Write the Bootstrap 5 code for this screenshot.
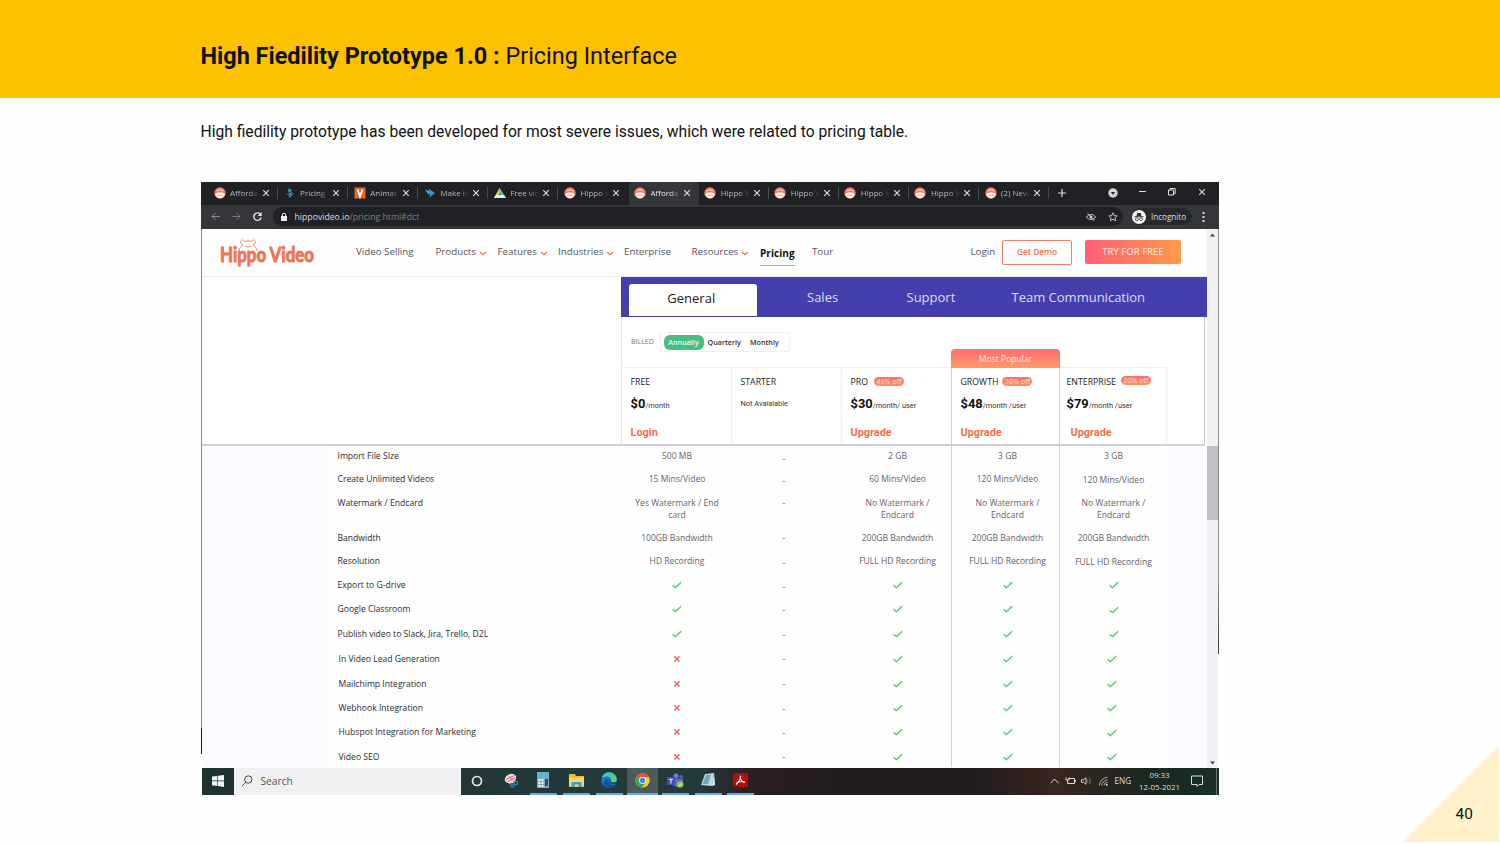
<!DOCTYPE html>
<html lang="en">
<head>
<meta charset="utf-8">
<meta name="viewport" content="width=device-width, initial-scale=1">
<title>High Fiedility Prototype 1.0 : Pricing Interface</title>
<link href="https://cdn.jsdelivr.net/npm/bootstrap@5.3.0/dist/css/bootstrap.min.css" rel="stylesheet">
<style>
html,body{height:844px;overflow:hidden}
body{background:#fefefe;font-family:Roboto,"Liberation Sans",sans-serif;color:#111;line-height:1.2}
svg{display:block;flex:none;overflow:visible}
.title-bar{height:98px;background:#fcc200;padding-left:200.5px;padding-top:15px}
.title-bar h1{font-size:23.45px;color:#111}
.intro{height:84px;padding:25px 0 0 200.5px;font-size:15.64px}
.stage{margin-left:201px;width:1018px}
.os{font-family:"Open Sans","Noto Sans",sans-serif}

.tab-strip{height:23px;background:#202124;padding-left:7px;color:#b9babd;font-size:8px}
.tab-item{width:70.1px;height:23px;padding-left:5.5px;padding-bottom:1px;position:relative}
.tab-item.sep::after{content:"";position:absolute;right:0;top:5px;height:12px;width:1px;background:#4b4c50}
.tab-item.active{background:#35363a;border-radius:4px 4px 0 0;color:#e4e4e6}
.tab-name{width:29px;margin-left:4.5px;overflow:hidden;white-space:nowrap;-webkit-mask-image:linear-gradient(90deg,#000 65%,transparent 100%);mask-image:linear-gradient(90deg,#000 65%,transparent 100%)}
.tool-row{height:24px;background:#35363a;color:#ddd;padding-bottom:.5px}
.address{height:19px;width:850px;background:#202124;border-radius:10px;font-size:8.7px;color:#dcdcde;padding:0 11px 0 8px;margin-left:10.5px}
.address .path-part{color:#7d7e82}
.incog{height:17px;background:#27282b;border-radius:9px;width:60px;font-size:8.1px;margin-left:9px}

.screen{height:538.5px;grid-template-columns:1px 1005px 11px 1px}
.edge-l{height:525px;background:linear-gradient(#8b8b8f 499px,#15171c 499px)}
.edge-r{height:425px;background:linear-gradient(#8a8a8e 350px,#3c3c40)}
.scroller{background:#f1f0f3;height:538px;color:#444;padding:4px 0 2px}
.thumb{height:74px;background:#c1c0c3;margin-top:209px}
.site-nav{height:48px;border-bottom:1px solid #efecf1;font-size:9.75px;color:#55555b}
.site-grid{display:grid;height:46px;align-items:center;grid-template-columns:154px 79.5px 62px 60.5px 66px 67.5px 68.5px 52px 158.5px 31.5px 70px 13px 96px}
.menu-link{display:flex;align-items:center;gap:3px}
.menu-link svg{margin-top:2px}
.now{font-weight:700;font-size:10.1px;color:#111;border-bottom:1px solid #f58b90;width:35px;height:20px;margin-top:7px;padding-top:1px;line-height:13px}
.demo{height:25px;border:1px solid #ef7f66;border-radius:2px;font-size:8.3px;font-weight:600;color:#ef7450;padding:1px 0 0}
.trial{height:24px;margin-top:-1px;border:0;border-radius:2px;background:linear-gradient(90deg,#ff5f76,#ff9a49);color:#ffe8df;font-size:9.6px;padding:1px 0 0}

.price-panel{height:169px;width:1003px;border-right:1px solid #c9c8cc;border-bottom:2px solid #cfced2;background:#fff;padding-left:419px}
.plan-tabs{height:39.5px;width:586px;background:#453fad;color:#dedcf5;font-size:13px;display:grid;grid-template-columns:7.5px 128.5px 50px 99.5px 105px auto;align-items:center;padding-top:2px}
.plan-tabs .on{height:32px;margin-top:5px;background:#fff;color:#222;border-radius:3px 3px 0 0;text-align:center;line-height:28px;padding-right:3px}
.plan-body{border-left:1px solid #e9e6ee;height:127.5px;width:583px}
.billing{height:50.5px;padding-left:9px}
.bill-word{font-size:7px;margin-top:21px;width:22.5px;color:#777}
.cycle{border:1px solid #f1eef2;border-radius:2px;height:20px;width:130px;margin:15.5px 0 0 6px;font-size:7.2px;font-weight:600;color:#333;padding-left:3px}
.cycle b{font-weight:600;background:#47bd82;color:#e6fff2;border-radius:6px;height:15px;width:40px;line-height:15px;text-align:center}
.popular{width:109px;height:19px;margin-left:161.5px;margin-top:32px;border-radius:4px 4px 0 0;background:linear-gradient(#fd6e70,#fd9a66);color:#ffe6dc;font-size:8.6px;line-height:20px;text-align:center}
.plans{display:grid;grid-template-columns:110px 110px 110px 108px 107px;border-top:1px solid #f0edf2;width:545px;height:77px}
.plan{border-right:1px solid #f1eef3;padding:9px 0 0 8.5px;height:76px;white-space:nowrap}
.plan.hot{border-right:1px solid #f9bdc4}
.plan .p-name{font-size:8.75px;line-height:11px;height:12px;color:#222}
.off{font-size:7.2px;line-height:8.5px;height:8.5px;width:30px;text-align:center;border-radius:5px;background:linear-gradient(#fd6e70,#fd9366);color:#ffe0d6;display:block}
.amount{font-family:Roboto,sans-serif;font-size:7.4px;color:#333;margin-top:7px;height:16px;line-height:16.5px}
.amount b{font-size:12.9px;color:#111}
.act{font-family:Roboto,sans-serif;color:#f0714e;font-weight:700;font-size:10.9px;margin-top:13.5px;line-height:14px}

.feature-zone{height:321px;overflow:hidden;display:grid;grid-template-columns:126px 294px 110px 110px 110px 108px 107px 1fr;background:#fefefe}
.side{background:#fafbfe}
.col-line{border-right:1px solid #f9bdc4}
.f-cell{font-size:8.55px;line-height:12px;color:#65646a;text-align:center;overflow:hidden}
.f-cell svg{margin:1.5px auto 0}
.f-labels{padding:3.5px 0 0 9.5px;color:#2b2b2f;font-size:8.6px;line-height:12px}
.tick{filter:drop-shadow(0 0 2px #b6f7c0)}

.taskbar{height:27px;margin-left:1px;width:1017px;background:linear-gradient(90deg,#1d312f 0,#24393a 38%,#23393a 49%,#2c1e21 54%,#201c20 63%,#211c20 76%,#3b241e 84%,#2b251f 88%,#17281f 94%,#1a3029)}
.start{width:32px;height:27px}
.find{width:227px;height:27px;background:#f0eff1;color:#555;font-size:10.2px;padding-left:7px}
.app{width:32.95px;height:27px;display:flex;align-items:center;justify-content:center}
.app.run span{border-bottom:2px solid #6ba5ec;width:27px;height:27px;display:flex;align-items:center;justify-content:center}
.app.front span{background:#4a5b5b;width:31px}
.tray{color:#dcdcdc;font-size:8.2px}
.clock{line-height:12px;width:42px;margin-left:8px;font-size:7.9px;white-space:nowrap;padding-bottom:1px}
.corner{position:absolute;right:1px;bottom:2px;width:96px;height:96px;background:#fff2cb;clip-path:polygon(100% 0,100% 100%,0 100%)}
.page-no{position:absolute;left:1455.5px;top:805px;font-size:15.4px}
</style>
</head>
<body>
<svg width="0" height="0" class="position-absolute">
<defs>
<symbol id="hippo" viewBox="0 0 12 12"><circle cx="6" cy="6" r="5.7" fill="#f4785f"/><path d="M1 7.2C2.5 4.5 9.500 4.500 11 7.200 10.500 9.500 8.500 11.200 6 11.200S1.500 9.500 1 7.200z" fill="#fff0e9"/><path d="M2.500 4.200c1-1.700 6-1.700 7 0" stroke="#ffe1d7" fill="none"/><path d="M2.500 8.500h7" stroke="#f4a08c" stroke-width=".7"/></symbol>
<symbol id="tri2" viewBox="0 0 12 12"><path d="M4.500 1 8 3.500 4.500 6z" fill="#2bb3c9"/><path d="M1.500 5.500 5 8 10.500 6 6 11z" fill="#2d6bd4"/><path d="M4.500 6.500 9 5 6 8z" fill="#74c34b"/></symbol>
<symbol id="vee" viewBox="0 0 12 12"><path d="M.5.5h11v11H.5z" fill="#e4682e"/><path d="M3.500 2.500 6 9.500 8.500 2.500" fill="none" stroke="#fff" stroke-width="1.800"/></symbol>
<symbol id="plays" viewBox="0 0 12 12"><path d="M1 2.500 6 4.500 5 8z" fill="#38c6dd"/><path d="M4.500 1.500 11 6 5.500 10.500 6 6z" fill="#2597cf"/></symbol>
<symbol id="drive" viewBox="0 0 12 12"><path d="M5.500 1 0 11h4l3.500-6.500z" fill="#e9d94f"/><path d="M5.500 1 12 11H9L4.500 4z" fill="#78c584"/><path d="M2 8h8l2 3H0z" fill="#dceef0"/><path d="M4 8 6 5l2 3z" fill="#3fa3a0"/></symbol>
<symbol id="close" viewBox="0 0 8 8"><path d="M1.200 1.200l5.600 5.600M6.800 1.200 1.200 6.800" stroke="currentColor" stroke-width="1.150"/></symbol>
<symbol id="down" viewBox="0 0 8 5"><path d="M1 1l3 2.700L7 1" fill="none" stroke="#ee7059" stroke-width="1.150"/></symbol>
<symbol id="ok" viewBox="0 0 10 8"><path d="M.7 4.200 3.400 6.700 9.200 1.200" fill="none" stroke="#62bd7b" stroke-width="1.300"/></symbol>
<symbol id="no" viewBox="0 0 8 8"><path d="M1.300 1.300l5.200 5.200M6.500 1.300 1.300 6.500" stroke="#ee5f60" stroke-width="1.400"/></symbol>
</defs>
</svg>

<header class="title-bar d-flex align-items-center"><h1 class="fw-normal mb-0"><b>High Fiedility Prototype 1.0 :</b> Pricing Interface</h1></header>
<p class="intro mb-0">High fiedility prototype has been developed for most severe issues, which were related to pricing table.</p>

<main class="stage">
  <div class="tab-strip os d-flex align-items-center">
    <div class="d-flex" id="tabs"></div>
    <div class="d-flex align-items-center flex-grow-1 pb-1" style="color:#ddd">
      <svg width="8" height="8" style="margin:2px 0 0 8.500px"><path d="M4 0v8M0 4h8" stroke="currentColor" stroke-width="1.200"/></svg>
      <svg width="10" height="10" style="margin:3px 0 0 42.500px"><circle cx="5" cy="5" r="4.700" fill="#d3d3d6"/><path d="M2.800 4h4.400L5 6.700z" fill="#202124"/></svg>
      <svg width="8" height="8" style="margin-left:21px"><path d="M0 3.500h7" stroke="currentColor"/></svg>
      <svg width="8" height="8" style="margin-left:21px"><path d="M.5 2h5v5h-5zM2 2V.5h5.200v5.200H5.500" fill="none" stroke="currentColor"/></svg>
      <svg width="8" height="8" style="margin-left:22px"><use href="#close"/></svg>
    </div>
  </div>
  <div class="tool-row os d-flex align-items-center">
    <svg width="9" height="9" viewBox="0 0 9 9" style="margin-left:9.500px"><path d="M8.700 4.500H1M4.500 1 1 4.500 4.500 8" fill="none" stroke="#8f9093"/></svg>
    <svg width="9" height="9" viewBox="0 0 9 9" style="margin-left:12px"><path d="M.3 4.500H8M4.500 1 8 4.500 4.500 8" fill="none" stroke="#77787c"/></svg>
    <svg width="9" height="9" viewBox="0 0 9 9" style="margin-left:12.500px"><path d="M7.500 2.500A3.700 3.700 0 1 0 8.100 5.500" fill="none" stroke="#ececec" stroke-width="1.300"/><path d="M8.700 0v4H4.700z" fill="#ececec"/></svg>
    <div class="address d-flex align-items-center">
      <svg width="6" height="8"><path d="M0 3h6v5H0z" fill="#eee"/><path d="M1.300 3V2a1.700 1.700 0 0 1 3.400 0v1" fill="none" stroke="#eee"/></svg>
      <span style="margin-left:8px">hippovideo.io<span class="path-part">/pricing.html#dct</span></span>
      <svg class="ms-auto" width="10" height="8" viewBox="0 0 10 8"><path d="M.5 4C2.500.7 7.500.7 9.500 4 7.500 7.300 2.500 7.300.5 4z" fill="none" stroke="#ccc"/><circle cx="5" cy="4" r="1.500" fill="#ccc"/><path d="M1.500.3l7 7.400" stroke="#ccc"/></svg>
      <svg width="10" height="10" viewBox="0 0 10 10" style="margin-left:11.500px;margin-right:-6px"><path d="M5 .8l1.200 2.800 3 .2-2.300 2 .8 3L5 7.200 2.300 8.800l.8-3-2.300-2 3-.2z" fill="none" stroke="#ccc" stroke-width=".9"/></svg>
    </div>
    <div class="incog d-flex align-items-center">
      <svg width="14" height="14" viewBox="0 0 14 14"><circle cx="7" cy="7" r="7" fill="#f4f4f4"/><path d="M4.500 6 5.200 3h3.600l.7 3z" fill="#333"/><path d="M2.500 6.700h9" stroke="#333"/><circle cx="4.900" cy="9.200" r="1.500" fill="none" stroke="#333" stroke-width=".8"/><circle cx="9.100" cy="9.200" r="1.500" fill="none" stroke="#333" stroke-width=".8"/></svg>
      <span style="margin-left:5.500px">Incognito</span>
    </div>
    <svg width="3" height="10" style="margin-left:10px"><path d="M.5 0h2v2h-2zM.5 4h2v2h-2zM.5 8h2v2h-2z" fill="#ddd"/></svg>
  </div>

  <div class="screen os d-grid">
    <div class="edge-l"></div>
    <div>
      <nav class="site-nav">
        <div class="site-grid">
          <svg width="130" height="46" viewBox="0 0 130 46"><text x="18" y="33" font-size="20.500" fill="#ef7350" stroke="#ef7350" stroke-width=".9" stroke-linejoin="round" font-family="Lato" font-weight="700" textLength="94" lengthAdjust="spacingAndGlyphs">Hippo Video</text><path d="M37 22c0-3 2-5 4-5.500-3-2-3-5.500-.5-5.500 1.500 0 2 1.500 2 1.500 2-.8 5-.8 7 0 0 0 .5-1.500 2-1.500 2.500 0 2.500 3.500-.5 5.500 2 .5 4 2.500 4 5.500M43 17c2 1.200 4.500 1.200 6.500 0" fill="none" stroke="#f08c72" stroke-width="1"/></svg>
          <span>Video Selling</span>
          <span class="menu-link">Products <svg width="8" height="5"><use href="#down"/></svg></span>
          <span class="menu-link">Features <svg width="8" height="5"><use href="#down"/></svg></span>
          <span class="menu-link">Industries <svg width="8" height="5"><use href="#down"/></svg></span>
          <span>Enterprise</span>
          <span class="menu-link">Resources <svg width="8" height="5"><use href="#down"/></svg></span>
          <span class="now">Pricing</span>
          <span>Tour</span>
          <span>Login</span>
          <button class="btn demo">Get Demo</button><i></i>
          <button class="btn trial">TRY FOR FREE</button>
        </div>
      </nav>
      <section class="price-panel">
        <div class="plan-tabs"><i></i><span class="on">General</span><i></i><span>Sales</span><span>Support</span><span>Team Communication</span></div>
        <div class="plan-body">
          <div class="billing d-flex">
            <span class="bill-word">BILLED</span>
            <div class="cycle d-flex align-items-center"><b>Annually</b><span style="margin-left:4px">Quarterly</span><span style="margin-left:9px">Monthly</span></div>
            <div class="popular">Most Popular</div>
          </div>
          <div class="plans">
            <div class="plan"><div class="p-name">FREE</div><div class="amount"><b>$0</b>/month</div><div class="act">Login</div></div>
            <div class="plan"><div class="p-name">STARTER</div><div class="amount">Not Avaialable</div></div>
            <div class="plan hot"><div class="p-name d-flex">PRO<span class="off" style="margin-left:6px">49% off</span></div><div class="amount"><b>$30</b>/month/ user</div><div class="act">Upgrade</div></div>
            <div class="plan hot"><div class="p-name d-flex">GROWTH<span class="off" style="margin-left:4px">30% off</span></div><div class="amount"><b>$48</b>/month /user</div><div class="act">Upgrade</div></div>
            <div class="plan" style="padding-left:6.500px"><div class="p-name d-flex">ENTERPRISE<span class="off" style="margin:-1px 0 0 5px">20% off</span></div><div class="amount"><b>$79</b>/month /user</div><div class="act ps-1">Upgrade</div></div>
          </div>
        </div>
      </section>
      <section class="feature-zone" id="features"></section>
    </div>
    <div class="scroller d-flex flex-column"><svg class="mx-auto" width="5" height="4"><path d="M0 3.500h5L2.500.5z" fill="#444"/></svg><div class="thumb"></div><svg class="mx-auto mt-auto" width="5" height="4"><path d="M0 .5h5L2.500 3.500z" fill="#444"/></svg></div>
    <div class="edge-r"></div>
  </div>

  <footer class="taskbar os d-flex align-items-center">
    <div class="start d-flex align-items-center justify-content-center"><svg width="12" height="12" viewBox="0 0 12 12"><path d="M0 1.600 5.400.9v4.700H0zM6 .8 12 0v5.600H6zM0 6.200h5.400v4.700L0 10.200zM6 6.200h6V12l-6-.9z" fill="#f3f5f5"/></svg></div>
    <div class="find d-flex align-items-center"><svg width="12" height="12" viewBox="0 0 12 12"><circle cx="7.300" cy="4.500" r="3.700" fill="none" stroke="#444"/><path d="M4.700 7.200.8 11.200" stroke="#444"/></svg><span style="margin-left:7.500px">Search</span></div>
    <div class="app"><span><svg width="12" height="12"><circle cx="6" cy="6" r="4.500" fill="none" stroke="#e8eeee" stroke-width="1.700"/></svg></span></div>
    <div class="app"><svg width="16" height="14" viewBox="0 0 16 14"><ellipse cx="8.500" cy="4.500" rx="6" ry="4.300" transform="rotate(-25 8.500 4.500)" fill="#f1dde2"/><path d="M3.500 5.500l9-4M5.500 7.500l8-4M7.500 2.500l3 4" stroke="#d85a6b"/><path d="M6.500 9l5-1" stroke="#ddd" stroke-width="1.500"/><circle cx="10.500" cy="11.500" r="1.700" fill="none" stroke="#2b8fbf" stroke-width="1.200"/><circle cx="14" cy="9" r="1.700" fill="none" stroke="#2b8fbf" stroke-width="1.200"/></svg></div>
    <div class="app run"><span><svg width="12" height="16" viewBox="0 0 12 16"><path d="M0 0h12v16H0z" fill="#8ba5b4"/><path d="M1 1h10v4H1z" fill="#43c0dd"/><path d="M1.500 7h2v2h-2zm3 0h2v2h-2zm-3 3h2v2h-2zm3 0h2v2h-2zm-3 3h2v2h-2zm3 0h2v2h-2z" fill="#eef3f5"/><path d="M8 7h3v7H8z" fill="#1c4f86"/></svg></span></div>
    <div class="app run"><span><svg width="15" height="13" viewBox="0 0 15 13"><path d="M0 0h6l1 2h8v11H0z" fill="#e9b83c"/><path d="M0 3.500h15V12H0z" fill="#fbd665"/><path d="M2.500 13V8h10v5h-3v-2.500h-4V13z" fill="#3b9fd2"/></svg></span></div>
    <div class="app run"><span><svg width="16" height="16" viewBox="0 0 16 16"><circle cx="8" cy="8" r="7.800" fill="#1679c9"/><path d="M1 5C3-1 12-1.500 15 4c2 4-1 6.500-5 6 1-3-1-5.500-4-5.500S1 6 1 5z" fill="#41c7b5"/><path d="M10 2c4 0 6 4 5.500 6.500S12 10.500 10 10c1-2 1.500-5 0-8z" fill="#59ce69"/><path d="M7 7c-1 4 3 7 7.500 5.500C12 16 8 16 6 15 1 12.500 3 7 7 7z" fill="#0f509c"/><path d="M8 7.500c-1 3 2 5 6 4.500 1-.5 1.500-1.500 1.500-2-2 .7-4 .5-5.500 0z" fill="#2b4144"/></svg></span></div>
    <div class="app run front"><span><svg width="15" height="15" viewBox="0 0 16 16"><circle cx="8" cy="8" r="7.700" fill="#f6c93f"/><path d="M8 8 1.300 4.200A7.700 7.700 0 0 1 14.700 4.200H8z" fill="#e44f3e"/><path d="M8 8 1.300 4.200A7.700 7.700 0 0 0 7.500 15.700L11 10z" fill="#37a35a"/><circle cx="8" cy="8" r="3.700" fill="#fff"/><circle cx="8" cy="8" r="2.900" fill="#4a86e8"/></svg></span></div>
    <div class="app run"><span><svg width="17" height="15" viewBox="0 0 17 15"><circle cx="9" cy="2.700" r="2.500" fill="#7178d5"/><circle cx="14" cy="3.500" r="1.700" fill="#555dbd"/><path d="M6 5.500h10V11c-2 3-9 4-10 0z" fill="#6269cb"/><path d="M0 4h8v8H0z" fill="#444cae"/><path d="M2 6.300h4M4 6.300V10.500" stroke="#fff"/><circle cx="13.200" cy="11.500" r="3.300" fill="#93c83e"/><path d="M11.600 11.500l1.200 1.200 2-2.200" fill="none" stroke="#fff" stroke-width=".9"/></svg></span></div>
    <div class="app run"><span><svg width="14" height="15" viewBox="0 0 14 15"><path d="M4 1 13 0 11 13 0 12z" fill="#b9dce4"/><path d="M5 2 10 1.500 7 11 1.500 11z" fill="#6faabb"/><path d="M13 0 14 12 11 13z" fill="#eef4f5"/></svg></span></div>
    <div class="app run"><span><svg width="15" height="14" viewBox="0 0 15 14"><rect width="15" height="14" rx="2" fill="#b50e08"/><path d="M7.200 3C8.500 3 7 8 3.500 11 3 9.500 8 7.500 11.500 9 11 10.300 7 7.500 7.200 3z" fill="none" stroke="#fff" stroke-width="1.100"/></svg></span></div>
    <div class="tray d-flex align-items-center ms-auto">
      <svg width="9" height="6"><path d="M.5 5.200 4.500 1 8.500 5.200" fill="none" stroke="currentColor"/></svg>
      <svg width="11" height="8" style="margin-left:6px"><path d="M3.500 1.500h6v5h-7v-2M10.300 3v2M1 .5v2.500h3V.5M2.500 3v2" fill="none" stroke="currentColor"/></svg>
      <svg width="11" height="8" style="margin-left:5px"><path d="M.5 2.700h2L5 .7v6.600L2.500 5.300h-2z" fill="none" stroke="currentColor" stroke-width=".9"/><path d="M6.500 2.500q1 1.500 0 3M8.500 1q2 3 0 6" fill="none" stroke="#8b8580" stroke-width=".8"/></svg>
      <svg width="9" height="9" style="margin-left:6.500px"><path d="M.5 8.500A8 8 0 0 1 8.500.5M2.800 8.500A5.700 5.700 0 0 1 8.500 3M5 8.500A3.500 3.500 0 0 1 8.500 5.200" fill="none" stroke="#aaa"/><circle cx="7.700" cy="7.700" r="1" fill="#ddd"/></svg>
      <span style="margin-left:7px;width:16px">ENG</span>
      <div class="clock text-center">09:33<br>12-05-2021</div>
      <svg width="12" height="12" style="margin:0 13.500px 0 10px"><path d="M.5 1h11v8.500H8L6 11.500 6 9.500H.5z" fill="none" stroke="currentColor"/></svg>
      <i style="width:1px;height:27px;background:#69736f;margin-right:2px"></i>
    </div>
  </footer>
</main>
<div class="corner"></div><div class="page-no">40</div>

<script src="https://cdn.jsdelivr.net/npm/bootstrap@5.3.0/dist/js/bootstrap.bundle.min.js"></script>
<script>
const tabs=[["hippo","Afforda"],["tri2","Pricing"],["vee","Animat"],["plays","Make in"],["drive","Free vid"],["hippo","Hippo V"],["hippo","Afforda"],["hippo","Hippo V"],["hippo","Hippo V"],["hippo","Hippo V"],["hippo","Hippo V"],["hippo","(2) New"]];
document.getElementById("tabs").innerHTML=tabs.map(([icon,name],i)=>
  `<div class="tab-item d-flex align-items-center ${i===6?"active":i===5?"":"sep"}"><svg width="12" height="12"><use href="#${icon}"/></svg><span class="tab-name">${name}</span><svg width="8" height="8" style="margin-left:3px;color:#ddd"><use href="#close"/></svg></div>`).join("");

const labels=["Import File SIze","Create Unlimited Videos","Watermark / Endcard","Bandwidth","Resolution","Export to G-drive","Google Classroom","Publish video to Slack, Jira, Trello, D2L","In Video Lead Generation","Mailchimp Integration","Webhook Integration","Hubspot Integration for Marketing","Video SEO"];
const heights=[23.5,23.5,35,23.5,23.5,24.5,24.5,25,25,24,24.5,24.5,15];
const dashTop=[3,1.5,0,.5,2,2,1,1,0,0,1,1,.5];
const tick='<svg class="tick" width="10" height="8"><use href="#ok"/></svg>',cross='<svg width="8" height="8"><use href="#no"/></svg>';
const ticks=Array(8).fill(tick);
const columns=[
  {cls:"",pad:"3.5px 0 0 0",v:["500 MB","15 Mins/Video","Yes Watermark / End<br>card","100GB Bandwidth","HD Recording",tick,tick,tick,cross,cross,cross,cross,cross]},
  {cls:"",pad:"3.5px 6px 0 0",v:Array(13).fill("-"),dash:true},
  {cls:"col-line",pad:"3.5px 0 0 2px",v:["2 GB","60 Mins/Video","No Watermark /<br>Endcard","200GB Bandwidth","FULL HD Recording",...ticks]},
  {cls:"col-line",pad:"3.5px 0 0 4px",v:["3 GB","120 Mins/Video","No Watermark /<br>Endcard","200GB Bandwidth","FULL HD Recording",...ticks]},
  {cls:"",pad:"4px 0 0 0",v:["3 GB","120 Mins/Video","No Watermark /<br>Endcard","200GB Bandwidth","FULL HD Recording",...ticks],late:true}];
document.getElementById("features").innerHTML='<div class="side"></div><div class="f-labels">'+
  labels.map((t,i)=>`<div style="height:${heights[i]}px;padding-left:${i>7?1:0}px">${t}</div>`).join("")+'</div>'+
  columns.map(c=>`<div class="${c.cls}" style="padding:${c.pad}">`+c.v.map((v,i)=>`<div class="f-cell" style="height:${heights[i]}px;padding:${c.dash?dashTop[i]:v===tick||v===cross?.5:0}px ${c.late&&i>7?4:0}px 0 0">${v}</div>`).join("")+'</div>').join("")+'<div class="side"></div>';
</script>
</body>
</html>
